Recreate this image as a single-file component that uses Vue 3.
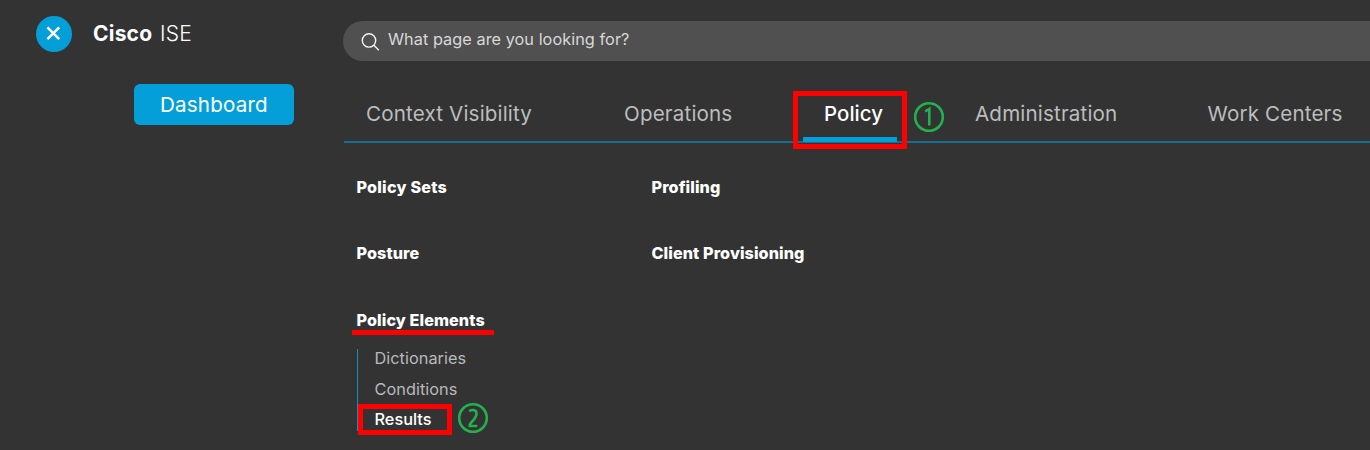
<script setup>
const tabs = [
  { label: 'Context Visibility', key: 'context' },
  { label: 'Operations', key: 'operations' },
  { label: 'Policy', key: 'policy', active: true },
  { label: 'Administration', key: 'administration' },
  { label: 'Work Centers', key: 'work' },
]
const elements = ['Dictionaries', 'Conditions', 'Results']
</script>

<template>
  <div class="page">
    <aside class="side">
      <div class="brand">
        <button class="close" aria-label="Close">
          <svg width="36" height="36" viewBox="0 0 36 36"><path d="M11.4 11.3 23.2 23.1M23.2 11.3 11.4 23.1" /></svg>
        </button>
        <div class="name"><b>Cisco</b><span>ISE</span></div>
      </div>
      <button class="dashboard"><span>Dashboard</span></button>
    </aside>

    <main class="main">
      <div class="search">
        <svg width="20" height="20" viewBox="0 0 20 20"><circle cx="8" cy="8.4" r="6.7" /><path d="M12.7 13.1 17.8 18.2" /></svg>
        <span>What page are you looking for?</span>
      </div>

      <nav class="tabs">
        <div v-for="t in tabs" :key="t.key" class="tab" :class="[t.key, { active: t.active }]">
          <span>{{ t.label }}</span>
          <template v-if="t.active">
            <i class="bar"></i>
            <i class="frame"></i>
            <svg class="step" width="32" height="32" viewBox="0 0 32 32"><circle cx="16" cy="16" r="13.8" /><path class="digit" d="M12.1 10.5 16.3 7.9V24.6" /></svg>
          </template>
        </div>
      </nav>

      <div class="columns">
        <div class="column">
          <h3 class="sets">Policy Sets</h3>
          <h3 class="posture">Posture</h3>
          <h3 class="elements">Policy Elements<i class="mark"></i></h3>
          <ul>
            <li v-for="e in elements" :key="e" :class="e.toLowerCase()">
              <span>{{ e }}</span>
              <template v-if="e === 'Results'">
                <i class="frame"></i>
                <svg class="step" width="32" height="32" viewBox="0 0 32 32"><circle cx="16" cy="16" r="13.8" /><path class="digit" d="M12.2 9.2C13.3 8.4 14.4 8 15.6 8C18.1 8 19.5 9.4 19.5 11.8C19.5 15.8 16.2 18 13.4 21.6Q12.4 23 12.7 24H20.3" /></svg>
              </template>
            </li>
          </ul>
        </div>
        <div class="column">
          <h3 class="profiling">Profiling</h3>
          <h3 class="client">Client Provisioning</h3>
        </div>
      </div>
    </main>
  </div>
</template>

<style>
body { background: #333; overflow: hidden; }
</style>

<style scoped>
* { box-sizing: border-box; }
.page {
  display: flex;
  width: 1370px;
  height: 450px;
  overflow: hidden;
  background: #333;
  color: #fff;
  font-family: Inter, "Liberation Sans", sans-serif;
}
button { border: 0; padding: 0; background: #049fd9; color: #fff; font-family: inherit; }
span { white-space: nowrap; }
.side { width: 343px; flex: none; padding: 16px 0 0 36px; }
.brand { display: flex; height: 36px; }
.close { width: 36px; height: 36px; border-radius: 50%; }
.close svg { display: block; fill: none; stroke: #fff; stroke-width: 2.5; }
.name { display: flex; margin-left: 21px; font-size: 21px; line-height: 36px; }
.name b { width: 67px; font-weight: 700; letter-spacing: 0.2px; }
.name span { font-weight: 300; letter-spacing: 0.3px; }
.dashboard {
  display: block;
  width: 160px;
  height: 41px;
  margin: 32px 0 0 98px;
  padding-left: 26px;
  border-radius: 6px;
  font-size: 20.6px;
  line-height: 40px;
  letter-spacing: 0.17px;
  text-align: left;
}
.main { flex: none; width: 1027px; padding-top: 21px; }
.search {
  display: flex;
  height: 40px;
  padding: 11px 0 0 18px;
  border-radius: 20px 0 0 20px;
  background: #505050;
}
.search svg { flex: none; fill: none; stroke: #f4f4f4; stroke-width: 1.4; }
.search span { margin: -4px 0 0 7px; font-size: 16.3px; line-height: 22px; letter-spacing: 0.04px; color: #d8d8d8; }
.tabs {
  display: flex;
  height: 82px;
  margin-left: 1px;
  padding: 38px 0 0 22px;
  border-bottom: 2px solid #156f94;
}
.tab { position: relative; flex: none; height: 30px; font-size: 20.6px; line-height: 30px; letter-spacing: 0.16px; color: #bbbdbe; }
.context { width: 258px; }
.operations { width: 200px; }
.policy { width: 151px; }
.administration { width: 232.5px; }
.tab.active { color: #fff; font-weight: 500; font-size: 20.4px; letter-spacing: 0.06px; }
.frame { position: absolute; border: 5px solid #f00; }
.bar { position: absolute; left: -21px; top: 38px; width: 94px; height: 5px; background: #049fd9; }
.tab .frame { left: -31px; top: -8px; width: 114px; height: 58px; }
.step { position: absolute; fill: none; stroke: #22b14c; stroke-width: 2.6; }
.tab .step { left: 88.5px; top: 2px; }
.columns { display: flex; padding: 32px 0 0 13.5px; }
.column { width: 295px; }
h3 { position: relative; height: 24px; margin: 0 0 42px; font-size: 16.2px; font-weight: 800; line-height: 24px; letter-spacing: 0.08px; white-space: nowrap; }
h3.sets { letter-spacing: 0.2px; }
h3.elements { top: 1px; margin: 0 0 18px; }
.mark { position: absolute; left: -4.5px; top: 22px; width: 142px; height: 5px; background: #f00; }
ul { list-style: none; height: 82px; margin: 0 0 0 0.5px; padding: 0 0 0 16.5px; border-left: 1px solid #1b8dbd; }
li { position: relative; top: -1px; height: 30.5px; font-size: 16.3px; line-height: 20px; letter-spacing: 0.04px; color: #b8babb; }
li.results { color: #fff; font-weight: 500; letter-spacing: 0; }
li .frame { left: -16.5px; top: -5px; width: 94px; height: 31px; }
li .step { left: 82px; top: -7px; }
</style>
